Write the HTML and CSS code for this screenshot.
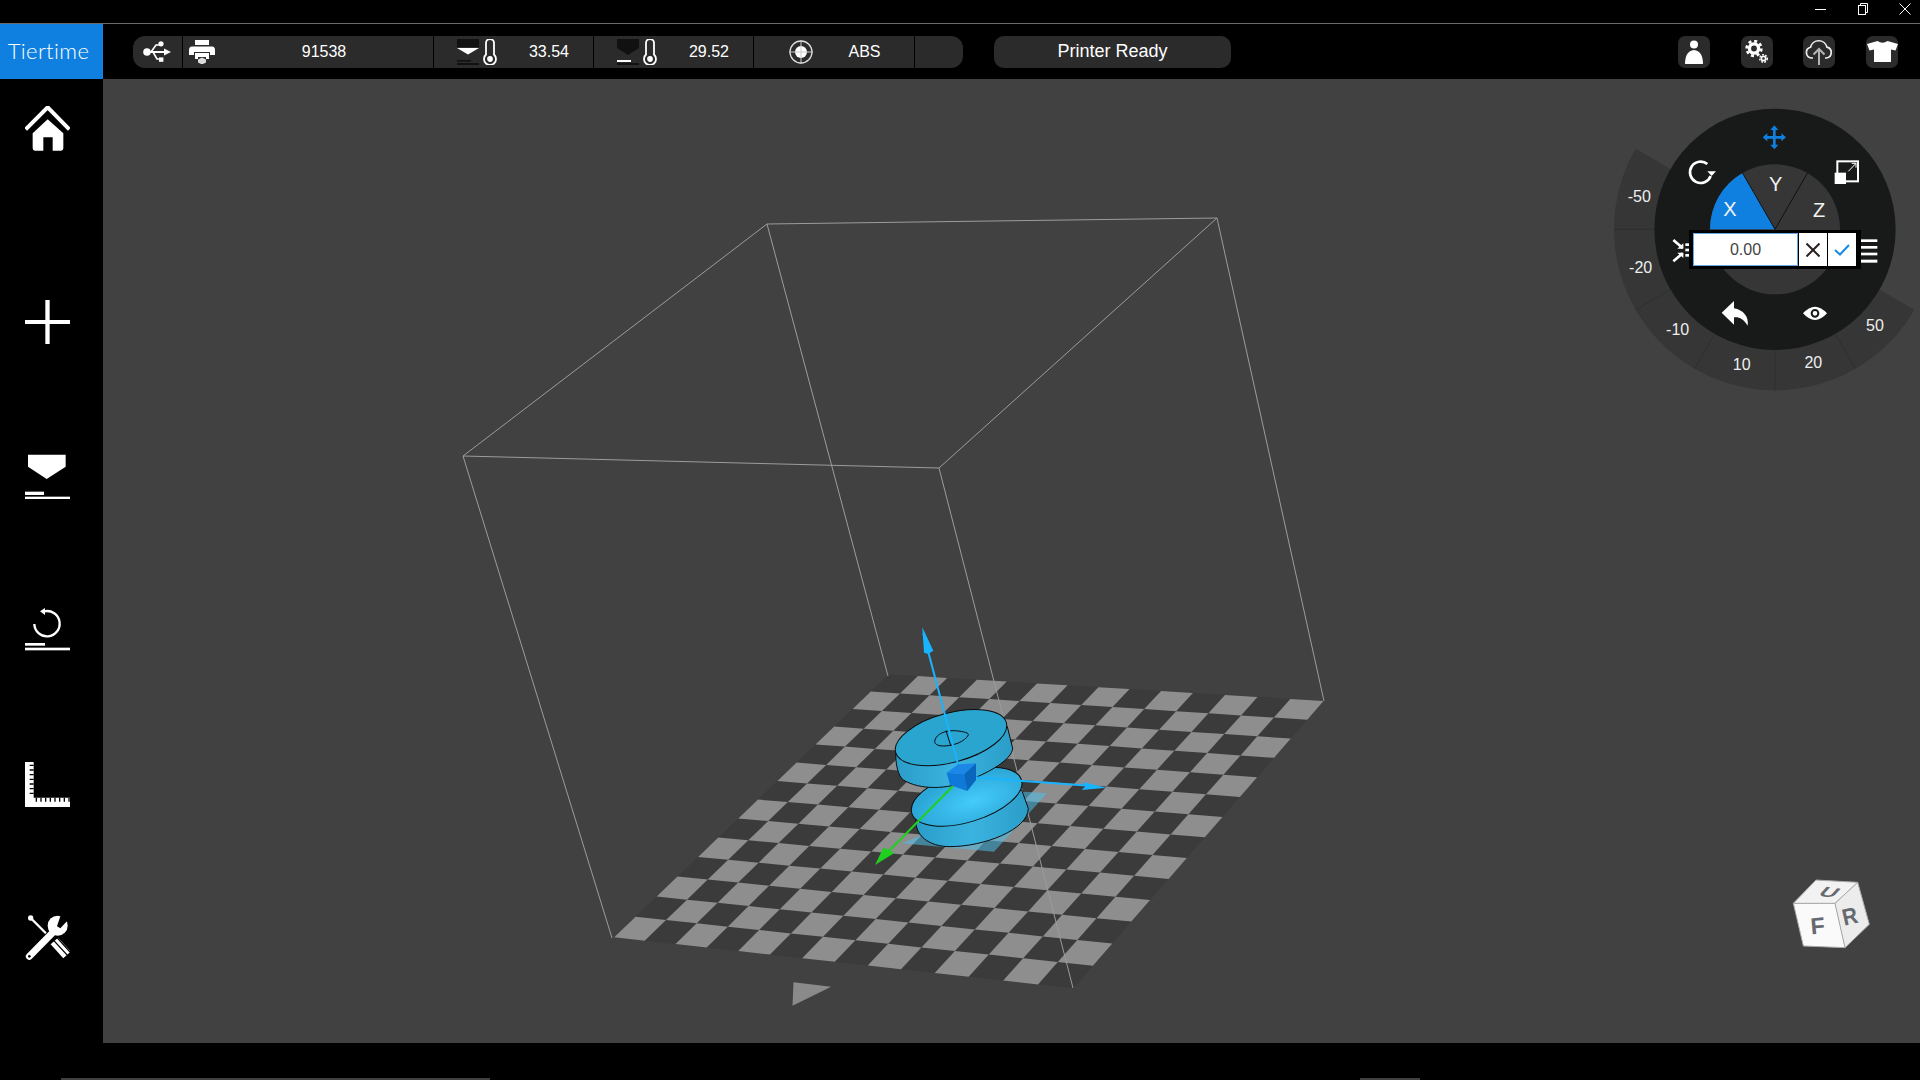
FILE: index.html
```html
<!DOCTYPE html>
<html lang="en">
<head>
    <meta charset="UTF-8">
    <title>Tiertime</title>
    <link rel="stylesheet" href="styles.css">
</head>
<body>
    <div class="titlebar">
        <svg class="win-btn" viewBox="0 0 12 12"><line x1="0" y1="6.5" x2="11" y2="6.5"/></svg>
        <svg class="win-btn" viewBox="0 0 12 12"><rect x="1.5" y="2.5" width="7" height="9"/><path d="M3.5 2.5V.5H10.5V9.5H8.5"/></svg>
        <svg class="win-btn" viewBox="0 0 12 12"><path d="M.5 .5L11.5 11.5M11.5 .5L.5 11.5"/></svg>
    </div>

    <div class="toolbar">
        <div class="logo">Tiertime</div>

        <div class="status">
            <div class="cell cell-usb">
                <svg width="28" height="22" viewBox="0 0 28 22" class="icon-fill">
                    <circle cx="4" cy="11" r="3.8"/>
                    <path d="M4 10H21V7.5L28 11L21 14.5V12H4Z"/>
                    <path d="M8 11L13 4H17" fill="none" stroke="#fff" stroke-width="1.6"/>
                    <path d="M10 11L14 18H17" fill="none" stroke="#fff" stroke-width="1.6"/>
                    <circle cx="18" cy="2.8" r="2.6"/>
                    <rect x="16" y="16.4" width="4.4" height="4.4"/>
                </svg>
            </div>
            <div class="cell cell-printer">
                <svg width="26" height="24" viewBox="0 0 26 24" class="icon-fill">
                    <rect x="6" y="0" width="14" height="5"/>
                    <path d="M3 6.5H23Q26 6.5 26 10V15H21V12H5V15H0V10Q0 6.5 3 6.5Z"/>
                    <path d="M6 13H20V19H17V17H9V19H6Z"/>
                    <path d="M13 17.5L17 19.5V22.5L13 24.5L9 22.5V19.5Z" fill="#ddd"/>
                </svg>
                <span class="value">91538</span>
            </div>
            <div class="cell cell-temp">
                <svg width="22" height="26" viewBox="0 0 22 26">
                    <rect x="0" y="0" width="22" height="8" fill="#111"/>
                    <path d="M0 9H22L11 15.5Z" fill="#fff"/>
                    <rect x="0" y="21" width="14" height="1.6" fill="#111"/>
                    <rect x="0" y="24" width="22" height="2" fill="#111"/>
                </svg>
                <svg class="thermo" width="14" height="26" viewBox="0 0 14 26"><path d="M3 15.5V4A4 4 0 0 1 11 4V15.5A6 6 0 1 1 3 15.5Z"/><circle cx="7" cy="20" r="2" fill="#fff"/></svg>
                <span class="value value-temp">33.54</span>
            </div>
            <div class="cell cell-temp">
                <svg width="22" height="26" viewBox="0 0 22 26">
                    <path d="M0 0H22V9L11 16L0 9Z" fill="#111"/>
                    <rect x="0" y="21" width="14" height="2" fill="#fff"/>
                    <rect x="0" y="24" width="22" height="2" fill="#111"/>
                </svg>
                <svg class="thermo" width="14" height="26" viewBox="0 0 14 26"><path d="M3 15.5V4A4 4 0 0 1 11 4V15.5A6 6 0 1 1 3 15.5Z"/><circle cx="7" cy="20" r="2" fill="#fff"/></svg>
                <span class="value value-temp">29.52</span>
            </div>
            <div class="cell cell-material">
                <svg width="24" height="24" viewBox="0 0 24 24">
                    <circle cx="12" cy="12" r="11" fill="none" stroke="#ddd" stroke-width="1.3"/>
                    <circle cx="12" cy="12" r="6" fill="#fff"/>
                    <path d="M12 0V24M0 12H24" stroke="#ccc" stroke-width="1"/>
                </svg>
                <span class="value value-material">ABS</span>
            </div>
            <div class="cell cell-end"></div>
        </div>

        <div class="printer-state">Printer Ready</div>

        <div class="actions">
            <div class="action">
                <svg width="18" height="24" viewBox="0 0 18 24" class="icon-fill">
                    <circle cx="9" cy="4.5" r="4"/>
                    <path d="M0 24Q0 11 9 10Q18 11 18 24Z"/>
                </svg>
            </div>
            <div class="action">
                <svg width="24" height="24" viewBox="0 0 24 24" fill="none" stroke="#fff">
                    <circle cx="9" cy="8.5" r="4.6" stroke-width="3.4"/>
                    <circle cx="9" cy="8.5" r="7.4" stroke-width="2.6" stroke-dasharray="3 2.8"/>
                    <circle cx="18.5" cy="18.5" r="2.2" stroke-width="1.7"/>
                    <circle cx="18.5" cy="18.5" r="3.8" stroke-width="1.4" stroke-dasharray="1.8 1.4"/>
                </svg>
            </div>
            <div class="action">
                <svg width="28" height="26" viewBox="0 0 28 26" fill="none" stroke="#eee" stroke-width="1.7">
                    <path d="M8 19H6.5A5.5 5.5 0 0 1 5.5 8.2A8.5 8.5 0 0 1 22 8.2A5.5 5.5 0 0 1 21.5 19H20"/>
                    <path d="M14 26V10M8.5 15.5L14 10L19.5 15.5" stroke="#b4b4b4" stroke-width="2"/>
                </svg>
            </div>
            <div class="action">
                <svg width="31" height="21" viewBox="0 0 31 21" class="icon-fill">
                    <path d="M10.5 0Q15.5 3.5 20.5 0L31 3L28.5 9.5L24 8.5V21H7V8.5L2.5 9.5L0 3Z"/>
                </svg>
            </div>
        </div>
    </div>

    <div class="workspace">
        <div class="sidebar">
            <!-- home -->
            <svg class="nav-icon nav-home" viewBox="0 0 135 135">
                <path d="M2 70L68 4L133 70" fill="none" stroke="#fff" stroke-width="12"/>
                <path d="M68 40L115 82V127Q115 134 108 134H83V94H55V134H30Q23 134 23 127V82Z" fill="#fff"/>
            </svg>
            <!-- add model -->
            <svg class="nav-icon" viewBox="0 0 135 135">
                <rect x="0" y="60" width="135" height="12" fill="#fff"/>
                <rect x="61" y="0" width="13" height="132" fill="#fff"/>
            </svg>
            <!-- print -->
            <svg class="nav-icon" viewBox="0 0 135 135">
                <path d="M9 2H122V38L65 75L9 38Z" fill="#fff"/>
                <rect x="0" y="113" width="57" height="10" fill="#fff"/>
                <rect x="0" y="128" width="135" height="8" fill="#fff"/>
            </svg>
            <!-- reset -->
            <svg class="nav-icon" viewBox="0 0 135 135">
                <path d="M58 10A38 38 0 1 1 28 48" fill="none" stroke="#fff" stroke-width="7"/>
                <path d="M45 10L60 0V21Z" fill="#fff"/>
                <rect x="0" y="105" width="60" height="8" fill="#fff"/>
                <rect x="0" y="119" width="136" height="8" fill="#fff"/>
            </svg>
            <!-- measure -->
            <svg class="nav-icon" viewBox="0 0 135 135">
                <path d="M0 0H26V107H136V135H0Z" fill="#fff"/>
                <line x1="20" y1="8" x2="20" y2="104" stroke="#000" stroke-width="12" stroke-dasharray="4 10"/>
                <line x1="32" y1="113" x2="134" y2="113" stroke="#000" stroke-width="12" stroke-dasharray="4 10"/>
            </svg>
            <!-- tools -->
            <svg class="nav-icon nav-tools" viewBox="0 0 135 135">
                <circle cx="17" cy="9" r="8" fill="#fff"/>
                <line x1="17" y1="9" x2="80" y2="72" stroke="#fff" stroke-width="7"/>
                <line x1="13" y1="124" x2="86" y2="50" stroke="#000" stroke-width="26"/>
                <line x1="88" y1="78" x2="126" y2="120" stroke="#fff" stroke-width="30"/>
                <path d="M86 76L128 122M96 68L136 112" stroke="#000" stroke-width="4"/>
                <line x1="13" y1="124" x2="86" y2="50" stroke="#fff" stroke-width="21" stroke-linecap="round"/>
                <circle cx="98" cy="32" r="30" fill="#fff"/>
                <path d="M96 34L108 -2H138V6L106 40Z" fill="#000"/>
                <circle cx="13" cy="124" r="4" fill="#000"/>
            </svg>
        </div>

        <div class="viewport">
            <svg class="scene" viewBox="103 79 1817 964">
                <g id="board"></g>

                <g class="wire">
                    <path d="M767 224L1217 218L939 468L463 456Z"/>
                    <path d="M463 456L612 938"/>
                    <path d="M1217 218L1324 701"/>
                    <path d="M767 224L888 676"/>
                    <path d="M939 468L1073 988"/>
                </g>

                <polygon class="front-mark" points="793.5,982.3 831.2,986.7 792.5,1005.7"/>

                <defs>
                    <radialGradient id="dome" cx="0.55" cy="0.62" r="0.55">
                        <stop offset="0" stop-color="#44ccfb"/>
                        <stop offset="1" stop-color="#2ba6d6"/>
                    </radialGradient>
                    <linearGradient id="side-top" x1="0" x2="1" y1="0" y2="0">
                        <stop offset="0" stop-color="#2a9dc8"/>
                        <stop offset="0.5" stop-color="#3bb3e0"/>
                        <stop offset="1" stop-color="#2a9dc8"/>
                    </linearGradient>
                </defs>

                <!-- model and gizmo, drawn at 3x -->
                <g transform="translate(840 620) scale(0.3333)">
                    <polygon points="186,670 554,515 621,520 462,695" fill="#4fc0ea" fill-opacity="0.55"/>

                    <path class="model-line" d="M228 600C225 645 265 680 330 680C430 680 565 630 565 565L545 510Z" fill="url(#side-top)"/>
                    <ellipse class="model-line" cx="380" cy="530" rx="172" ry="76" transform="rotate(-17 380 530)" fill="url(#dome)"/>

                    <path class="model-line" d="M168 395C165 430 175 470 190 480C240 510 320 510 390 480C450 455 515 420 518 385L502 320Z" fill="url(#side-top)"/>
                    <ellipse class="model-line" cx="333" cy="353" rx="172" ry="74" transform="rotate(-15 333 353)" fill="#2aa5cf"/>
                    <path class="model-line" d="M285 360C290 342 315 332 340 332C365 333 388 338 385 345C375 365 340 378 310 378C290 378 281 370 285 360Z" fill="#2aa5cf"/>
                    <path class="model-line" d="M318 332L332 376" fill="none"/>

                    <line x1="356" y1="440" x2="250" y2="40" stroke="#19b4ff" stroke-width="6"/>
                    <polygon points="247,22 280,92 264,102 252,98" fill="#19b4ff"/>
                    <line x1="400" y1="472" x2="760" y2="498" stroke="#19b4ff" stroke-width="6"/>
                    <polygon points="800,503 725,485 738,497 725,510" fill="#19b4ff"/>
                    <line x1="345" y1="492" x2="140" y2="700" stroke="#1fd01f" stroke-width="6"/>
                    <polygon points="105,735 130,683 148,690 162,700" fill="#1fd01f"/>

                    <polygon points="320,458 355,433 408,430 372,463" fill="#1b87e6"/>
                    <polygon points="320,458 372,463 382,513 330,495" fill="#0f78d8"/>
                    <polygon points="372,463 408,430 408,480 382,513" fill="#0a66bd"/>
                </g>
            </svg>

            <div class="radial">
                <svg class="radial-dial" viewBox="0 0 960 900">
                    <!-- step ring -->
                    <path d="M525 388L106.7 146.5A483 483 0 0 0 943.3 629.5Z" fill="#363636"/>
                    <g stroke="#2a2a2a" stroke-width="2">
                        <line x1="163" y1="388" x2="42" y2="388"/>
                        <line x1="211.5" y1="569" x2="106.7" y2="629.5"/>
                        <line x1="344" y1="701.5" x2="283.5" y2="806.3"/>
                        <line x1="525" y1="750" x2="525" y2="871"/>
                        <line x1="706" y1="701.5" x2="766.5" y2="806.3"/>
                    </g>
                    <circle cx="525" cy="388" r="362" fill="#181a1a"/>

                    <!-- axis hub -->
                    <circle cx="525" cy="388" r="195" fill="#363636"/>
                    <path d="M525 388H330A195 195 0 0 1 427.5 219Z" fill="#1080e0"/>
                    <path d="M525 388L427.5 219M525 388L622.5 219" stroke="#111" stroke-width="3"/>

                    <g class="radial-text">
                        <text x="118" y="306">-50</text>
                        <text x="122" y="518">-20</text>
                        <text x="233" y="704">-10</text>
                        <text x="425" y="810">10</text>
                        <text x="640" y="804">20</text>
                        <text x="825" y="692">50</text>
                    </g>
                    <g class="radial-axis">
                        <text x="390" y="348">X</text>
                        <text x="527" y="274">Y</text>
                        <text x="657" y="351">Z</text>
                    </g>

                    <!-- move -->
                    <path d="M523 82V142M494 112H552" stroke="#1080e0" stroke-width="8" fill="none"/>
                    <path d="M523 76L535 90H511ZM523 148L535 134H511ZM488 112L502 100V124ZM558 112L544 100V124Z" fill="#1080e0"/>
                    <!-- rotate -->
                    <path d="M322 192A32 32 0 1 0 332 228" fill="none" stroke="#fff" stroke-width="8"/>
                    <path d="M322 214H348L335 228Z" fill="#fff"/>
                    <!-- scale -->
                    <rect x="712" y="184" width="62" height="60" fill="none" stroke="#fff" stroke-width="6"/>
                    <rect x="704" y="218" width="34" height="34" fill="#fff"/>
                    <path d="M745 214L768 190M755 190H768V203" fill="none" stroke="#fff" stroke-width="3"/>
                    <!-- fit -->
                    <path d="M220 420L248 444M220 484L248 460" stroke="#fff" stroke-width="8" fill="none"/>
                    <path d="M250 446H232L250 430ZM250 458H232L250 474Z" fill="#fff"/>
                    <g fill="#fff">
                        <rect x="256" y="430" width="12" height="8"/><rect x="256" y="446" width="12" height="8"/><rect x="256" y="462" width="12" height="8"/>
                    </g>
                    <!-- list -->
                    <g fill="#fff">
                        <rect x="782" y="418" width="50" height="8"/><rect x="782" y="438" width="50" height="8"/>
                        <rect x="782" y="458" width="50" height="8"/><rect x="782" y="479" width="50" height="9"/>
                    </g>
                    <!-- undo -->
                    <path d="M365 638L402 603V625C430 630 447 650 443 677C430 656 417 650 402 652V674Z" fill="#fff"/>
                    <!-- view -->
                    <path d="M609 640Q645 600 681 640Q645 680 609 640Z" fill="#fff"/>
                    <circle cx="645" cy="640" r="10" fill="none" stroke="#181a1a" stroke-width="6"/>
                </svg>

                <div class="rotate-field">
                    <input class="rotate-input" type="text" value="0.00">
                    <div class="field-btn">
                        <svg width="14" height="14" viewBox="0 0 14 14"><path d="M.5 .5L13.5 13.5M13.5 .5L.5 13.5" stroke="#2b1f1f" stroke-width="2"/></svg>
                    </div>
                    <div class="field-btn">
                        <svg width="16" height="12" viewBox="0 0 16 12"><path d="M1 6L6 10.5L15 1" fill="none" stroke="#1a8ae8" stroke-width="2"/></svg>
                    </div>
                </div>
            </div>

            <svg class="view-cube" viewBox="0 0 480 330">
                <polygon points="100,130 168,60 293,67 225,130" fill="#f2f2f2"/>
                <polygon points="100,130 225,130 255,263 130,258" fill="#fafafa"/>
                <polygon points="225,130 293,67 328,193 255,263" fill="#ececec"/>
                <path d="M100 130L168 60L293 67L328 193L255 263L130 258ZM100 130H225L255 263M225 130L293 67" fill="none" stroke="#a8a8a8" stroke-width="3"/>
                <text transform="translate(196 110) rotate(8) skewX(-35) scale(1 .62)" class="cube-label">U</text>
                <text transform="translate(175 222) rotate(-5)" class="cube-label">F</text>
                <text transform="translate(275 192) rotate(-13) scale(.9 1)" class="cube-label">R</text>
            </svg>
        </div>
    </div>

    <div class="footer">
        <div class="strip strip-a"></div>
        <div class="strip strip-b"></div>
    </div>

    <script src="script.js"></script>
</body>
</html>
```

FILE: styles.css
```css
* {
    box-sizing: border-box;
}

body {
    margin: 0;
    width: 1920px;
    height: 1080px;
    overflow: hidden;
    background: #000;
    color: #fff;
    font-family: "Liberation Sans", Arial, sans-serif;
    display: flex;
    flex-direction: column;
}

.titlebar {
    height: 24px;
    border-bottom: 1px solid #6a6a6a;
    display: flex;
    justify-content: flex-end;
    align-items: flex-start;
    gap: 30px;
    padding: 3px 9px 0 0;
}

.win-btn {
    width: 12px;
    height: 12px;
    fill: none;
    stroke: #fff;
    stroke-width: 1;
}

.toolbar {
    height: 55px;
    display: flex;
    align-items: center;
}

.logo {
    width: 103px;
    height: 55px;
    padding: 0 6px 2px 0;
    background: #1080e0;
    font-family: Lato, sans-serif;
    font-weight: 300;
    font-size: 22px;
    letter-spacing: 0.4px;
    display: flex;
    align-items: center;
    justify-content: center;
}

.status {
    margin-left: 30px;
    height: 32px;
    display: flex;
    background: #2b2b2b;
    border-radius: 12px;
    overflow: hidden;
    font-size: 16px;
}

.cell {
    height: 32px;
    display: flex;
    align-items: center;
    border-right: 1px solid #000;
}

.cell-usb {
    width: 50px;
    padding-left: 10px;
}

.cell-printer {
    width: 251px;
    padding-left: 6px;
}

.cell-temp {
    width: 160px;
    padding-left: 23px;
    gap: 4px;
}

.cell-material {
    width: 161px;
    padding-left: 35px;
}

.cell-end {
    width: 48px;
    border-right: none;
}

.icon-fill {
    fill: #fff;
}

.thermo {
    fill: none;
    stroke: #fff;
    stroke-width: 1.8;
}

.value {
    flex: 1;
    text-align: center;
}

.value-temp {
    padding-left: 4px;
}

.value-material {
    padding-left: 2px;
}

.printer-state {
    margin-left: 31px;
    width: 237px;
    height: 32px;
    background: #2b2b2b;
    border-radius: 10px;
    font-size: 18px;
    display: flex;
    align-items: center;
    justify-content: center;
}

.actions {
    margin-left: auto;
    padding-right: 22px;
    display: flex;
    gap: 30.6px;
}

.action {
    width: 32px;
    height: 32px;
    background: #2b2b2b;
    border-radius: 7px;
    display: flex;
    align-items: center;
    justify-content: center;
}

.workspace {
    height: 964px;
    display: flex;
}

.sidebar {
    width: 103px;
    padding: 27px 0 0 25px;
    display: flex;
    flex-direction: column;
    gap: 109px;
}

.nav-icon {
    width: 45px;
    height: 45px;
    display: block;
    flex: none;
}

.nav-home {
    margin-bottom: 40px;
}

.nav-tools {
    margin-top: -1px;
}

.viewport {
    flex: 1;
    position: relative;
    background: #414141;
}

.scene {
    display: block;
    width: 100%;
    height: 100%;
}

.wire {
    fill: none;
    stroke: #9c9c9c;
    stroke-width: 1;
}

.board-base {
    fill: #3b3b3b;
}

.board-light {
    fill: #8e8e8e;
}

.front-mark {
    fill: #8a8a8a;
}

.model-line {
    stroke: #0c0c0c;
    stroke-width: 3;
}

.radial {
    position: absolute;
    top: 21px;
    right: 0;
    width: 320px;
    height: 300px;
}

.radial-dial {
    display: block;
    width: 100%;
    height: 100%;
}

.radial-text text {
    font-size: 48px;
    fill: #eee;
    text-anchor: middle;
}

.radial-axis text {
    font-size: 60px;
    fill: #f2f2f2;
    text-anchor: middle;
}

/* value box sits over the hub */
.rotate-field {
    position: absolute;
    left: 89px;
    top: 130px;
    width: 172px;
    height: 39px;
    background: #000;
    padding: 3px 4px;
    display: flex;
    gap: 1px;
}

.rotate-input {
    width: 105px;
    height: 33px;
    border: 1px solid #64a8e8;
    background: #fff;
    color: #444;
    font-family: "Liberation Sans", Arial, sans-serif;
    font-size: 16px;
    text-align: center;
    padding: 0;
    outline: none;
}

.field-btn {
    width: 28px;
    height: 33px;
    background: #fff;
    display: flex;
    align-items: center;
    justify-content: center;
}

.view-cube {
    position: absolute;
    right: 0;
    bottom: 73px;
    width: 160px;
    height: 110px;
}

.cube-label {
    font-family: "Liberation Sans", Arial, sans-serif;
    font-size: 70px;
    font-weight: bold;
    fill: #666a6e;
    text-anchor: middle;
}

.footer {
    flex: 1;
    padding: 35px 0 0 61px;
    display: flex;
    align-items: flex-start;
}

.strip {
    height: 2px;
    background: #404040;
}

.strip-a {
    width: 429px;
}

.strip-b {
    width: 60px;
    margin-left: 870px;
}
```

FILE: script.js
```js
// Build plate: 14 x 14 checker squares projected on to the four plate corners
const corners = [[614.2, 937.3], [1073.3, 988.3], [1323.5, 701], [888.8, 674.3]];
const cells = 14;

function makeProjection(p) {
    const [x0, y0] = p[0], [x1, y1] = p[1], [x2, y2] = p[2], [x3, y3] = p[3];
    const dx1 = x1 - x2, dx2 = x3 - x2, sx = x0 - x1 + x2 - x3;
    const dy1 = y1 - y2, dy2 = y3 - y2, sy = y0 - y1 + y2 - y3;
    const den = dx1 * dy2 - dx2 * dy1;
    const g = (sx * dy2 - dx2 * sy) / den;
    const h = (dx1 * sy - sx * dy1) / den;
    const a = x1 - x0 + g * x1, b = x3 - x0 + h * x3;
    const d = y1 - y0 + g * y1, e = y3 - y0 + h * y3;
    return (u, v) => {
        const w = g * u + h * v + 1;
        return [(a * u + b * v + x0) / w, (d * u + e * v + y0) / w];
    };
}

function addPolygon(parent, points, className) {
    const poly = document.createElementNS("http://www.w3.org/2000/svg", "polygon");
    poly.setAttribute("points", points.map(pt => pt[0].toFixed(1) + "," + pt[1].toFixed(1)).join(" "));
    poly.setAttribute("class", className);
    parent.appendChild(poly);
}

const board = document.getElementById("board");
const project = makeProjection(corners);

addPolygon(board, corners, "board-base");
for (let row = 0; row < cells; row++) {
    for (let col = 0; col < cells; col++) {
        if ((row + col) % 2 !== 0) continue;
        const u0 = col / cells, u1 = (col + 1) / cells;
        const v0 = row / cells, v1 = (row + 1) / cells;
        addPolygon(board, [project(u0, v0), project(u1, v0), project(u1, v1), project(u0, v1)], "board-light");
    }
}
```
